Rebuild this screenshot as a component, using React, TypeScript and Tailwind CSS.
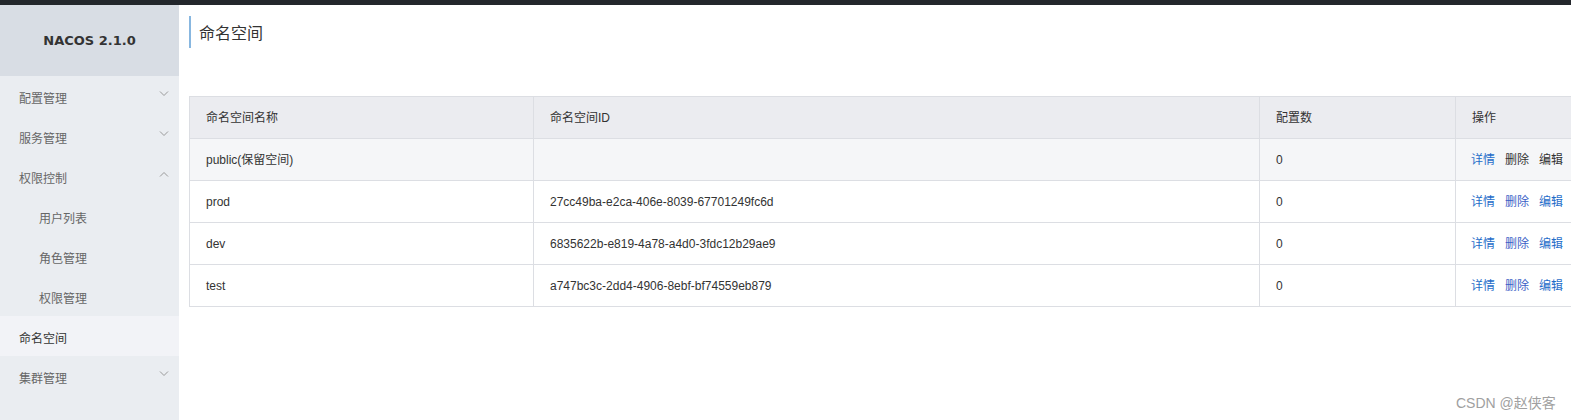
import React from "react";

const font = { fontFamily: '"Liberation Sans", "Noto Sans CJK SC", sans-serif' };

function Chevron({ up = false }: { up?: boolean }) {
  return (
    <svg width="10" height="6" viewBox="0 0 10 6" className="text-[#999]">
      {up ? (
        <path d="M1 5.5 L5 1.5 L9 5.5" fill="none" stroke="currentColor" strokeWidth="1" />
      ) : (
        <path d="M1 0.5 L5 4.5 L9 0.5" fill="none" stroke="currentColor" strokeWidth="1" />
      )}
    </svg>
  );
}

const menu: { label: string; sub?: boolean; chevron?: "up" | "down"; active?: boolean }[] = [
  { label: "配置管理", chevron: "down" },
  { label: "服务管理", chevron: "down" },
  { label: "权限控制", chevron: "up" },
  { label: "用户列表", sub: true },
  { label: "角色管理", sub: true },
  { label: "权限管理", sub: true },
  { label: "命名空间", active: true },
  { label: "集群管理", chevron: "down" },
];

const rows = [
  { name: "public(保留空间)", id: "", count: "0", reserved: true },
  { name: "prod", id: "27cc49ba-e2ca-406e-8039-67701249fc6d", count: "0" },
  { name: "dev", id: "6835622b-e819-4a78-a4d0-3fdc12b29ae9", count: "0" },
  { name: "test", id: "a747bc3c-2dd4-4906-8ebf-bf74559eb879", count: "0" },
];

export default function App() {
  return (
    <div className="relative h-[420px] w-[1571px] overflow-hidden bg-white text-[12px]" style={font}>
      <div className="h-[5px] bg-[#23272c]" />
      <div className="flex h-[415px]">
        <aside className="flex w-[179px] shrink-0 flex-col bg-[#eaedf1]">
          <div
            className="flex h-[71px] items-center justify-center bg-[#d8dde4] text-[13px] font-bold text-[#333]"
            style={{ fontFamily: '"DejaVu Sans", sans-serif' }}
          >
            NACOS 2.1.0
          </div>
          {menu.map((m) => (
            <div
              key={m.label}
              className={`flex h-[40px] items-center justify-between pr-[10px] ${m.sub ? "pl-[39px]" : "pl-[19px]"} ${
                m.active ? "bg-[#f2f3f7] text-[#333]" : "text-[#666]"
              }`}
            >
              <span className="pt-[5px] leading-none">{m.label}</span>
              {m.chevron && (
                <span className="-mt-[4px]">
                  <Chevron up={m.chevron === "up"} />
                </span>
              )}
            </div>
          ))}
        </aside>
        <main className="flex-1 pl-[10px]">
          <div
            className="mt-[11px] flex h-[32px] items-center border-l-2 border-[#88b7e0] pl-[8px] text-[16px] text-[#333]"
            style={{ fontFamily: '"Noto Sans CJK SC", sans-serif' }}
          >
            命名空间
          </div>
          <table className="mt-[48px] w-[1400px] table-fixed border-collapse text-[#333]">
            <colgroup>
              <col className="w-[344px]" />
              <col className="w-[726px]" />
              <col className="w-[196px]" />
              <col />
            </colgroup>
            <thead>
              <tr className="h-[42px] bg-[#ebecf0]">
                {["命名空间名称", "命名空间ID", "配置数", "操作"].map((h) => (
                  <th key={h} className="border border-[#dcdee3] pl-[16px] text-left font-normal">
                    {h}
                  </th>
                ))}
              </tr>
            </thead>
            <tbody>
              {rows.map((r) => (
                <tr key={r.name} className={`h-[42px] ${r.reserved ? "bg-[#f5f6f8]" : "bg-white"}`}>
                  <td className="border border-[#dcdee3] pl-[16px]">{r.name}</td>
                  <td className="border border-[#dcdee3] pl-[16px]">{r.id}</td>
                  <td className="border border-[#dcdee3] pl-[16px]">{r.count}</td>
                  <td className="border border-[#dcdee3] pl-[15px]">
                    <span className="text-[#1f6dc9]">详情</span>
                    <span className={`ml-[10px] ${r.reserved ? "text-[#333]" : "text-[#3c5fc6]"}`}>删除</span>
                    <span className={`ml-[10px] ${r.reserved ? "text-[#333]" : "text-[#1f6dc9]"}`}>编辑</span>
                  </td>
                </tr>
              ))}
            </tbody>
          </table>
        </main>
      </div>
      <div className="absolute left-[1456px] top-[393px] text-[14px] text-[#a0a0a0]">CSDN @赵侠客</div>
    </div>
  );
}
